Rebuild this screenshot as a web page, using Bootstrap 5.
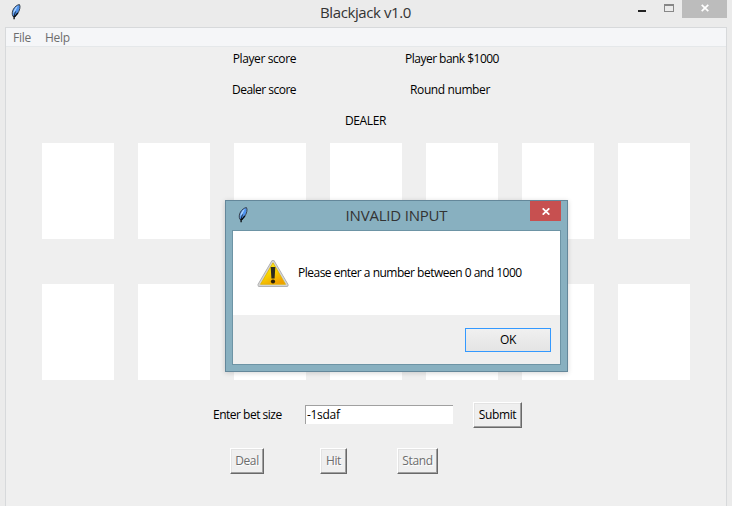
<!DOCTYPE html>
<html lang="en">
<head>
<meta charset="utf-8">
<meta name="viewport" content="width=device-width, initial-scale=1">
<title>Blackjack v1.0</title>
<link href="https://cdn.jsdelivr.net/npm/bootstrap@5.3.0/dist/css/bootstrap.min.css" rel="stylesheet">
<style>
  body { background: #ebebeb; font-family: "Open Sans", "Noto Sans", sans-serif; font-size: 12px; line-height: 16px; letter-spacing: -.4px; color: #000; height: 506px; }
  .titlebar { height: 27px; }
  .app-icon { margin: 4px 0 0 11px; }
  .win-title { font-size: 15px; line-height: 20px; letter-spacing: -.4px; color: #333; white-space: nowrap; }
  .main-title { padding: 2px 0 0 71px; }
  .close-gray { width: 45px; height: 18px; margin-right: 5px; background: #bcbcbc; }
  .frame { margin: 0 5px; height: 479px; border: 1px solid #d7d9db; border-bottom: 0; background: #efefef; }
  .menubar { height: 19px; background: #f5f6f8; border-bottom: 1px solid #e5e8ea; padding-left: 7px; gap: 14px; color: #6d6d6d; line-height: 20px; letter-spacing: -.25px; }
  .score-row { height: 31px; padding-top: 4px; }
  .left-label { width: 290px; text-align: right; }
  .right-label { width: 312px; text-align: center; }
  .bank { letter-spacing: -.53px; }
  .dealer-score { letter-spacing: -.52px; }
  .round-no { width: 308px; letter-spacing: -.4px; }
  .dealer-head { padding-right: 1px; }
  .slots-area { padding-top: 3px; }
  .slots { gap: 24px; margin-left: 36px; height: 96px; }
  .slot { width: 72px; background: #fff; }
  .slots + .slots { margin-top: 45px; }
  .bet-row { margin: 22px 0 0 207px; height: 26px; }
  .bet-label { width: 92px; letter-spacing: -.5px; }
  .bet-entry { width: 148px; height: 19px; margin: 0 20px 1px 0; border: 0; border-top: 1px solid #a0a0a0; border-left: 1px solid #a0a0a0; padding: 0 0 1px 1px; background: #fff; letter-spacing: -.3px; border-radius: 0; outline: 0; }
  .tk-btn { height: 26px; padding: 0; border: 1px solid; border-color: #fff #696969 #696969 #fff; box-shadow: inset -1px -1px #a0a0a0, inset 1px 1px #e3e3e3; background: #efefef; letter-spacing: -.35px; color: #000; }
  .tk-btn:disabled { color: #6d6d6d; text-shadow: 1px 1px #fff; }
  .play-row { margin: 20px 0 0 224px; }
  .w-submit { width: 49px; } .w-deal { width: 34px; margin-right: 56px; } .w-hit { width: 27px; margin-right: 50px; } .w-stand { width: 41px; }
  .dialog-win { left: 225px; top: 200px; width: 343px; height: 172px; background: #88b0c0; border: 1px solid #64879a; box-shadow: 0 1px 5px rgba(0,0,0,.17); padding: 0 6px 6px; }
  .dialog-bar { height: 29px; }
  .dialog-icon { margin: 6px 0 0 6px; }
  .dialog-title { padding: 4px 0 0 14px; letter-spacing: -.2px; }
  .close-red { width: 31px; height: 20px; background: #c75050; }
  .dialog-body { height: 135px; border: 1px solid #6d94a5; background: #efefef; }
  .dialog-msg { height: 84px; background: #fff; padding-left: 24px; }
  .warn-icon { margin-top: 2px; }
  .msg-text { margin-left: 9px; letter-spacing: -.5px; }
  .dialog-foot { height: 49px; padding-right: 9px; }
  .ok-btn { width: 86px; height: 24px; padding: 0; border: 1px solid #3399ff; background: linear-gradient(#f0f0f0, #e4e4e4); color: #000; letter-spacing: inherit; }
</style>
</head>
<body class="overflow-hidden m-0">
<svg class="d-none">
  <symbol id="feather" viewBox="0 0 11 17">
    <path d="M2 12.500C.8 10.500 1 7.500 2.500 5 3.800 2.800 6.300.6 8.500.6 9.700 2.500 8.700 6.500 6.700 9.500 5.500 11.200 4.500 12.200 3.600 12.700z" fill="#4f93ee" stroke="#3a434f" stroke-width="1"/>
    <path d="M2.300 9.800C2.200 6.800 4.300 3.500 7 1.800L4.500 6.500z" fill="#b4d6fa"/>
    <path d="M6.800 8.800 4 12.300 3.100 12.300 3.100 15.200" fill="none" stroke="#05070a" stroke-width="1.300"/>
    <path d="M3.200 12.500C3.500 10.200 4 8.800 4.700 7.500" fill="none" stroke="#10151d" stroke-width=".9"/>
  </symbol>
  <symbol id="cross" viewBox="0 0 8 7">
    <path d="M.7.3 7.300 6.700M7.300.3.7 6.700" stroke="#fff" stroke-width="1.700" fill="none"/>
  </symbol>
</svg>

<header class="titlebar d-flex justify-content-between align-items-start">
  <svg class="app-icon" width="11" height="17"><use href="#feather"/></svg>
  <div class="win-title main-title flex-grow-1 text-center">Blackjack v1.0</div>
  <svg width="44" height="18" shape-rendering="crispEdges">
    <rect x="0" y="10" width="8" height="2" fill="#222"/>
    <path d="M26 4h10v8H26zM27 6v5h8V6z" fill="#878787" fill-rule="evenodd"/>
  </svg>
  <div class="close-gray d-flex justify-content-center pt-1"><svg width="8" height="8"><use href="#cross"/></svg></div>
</header>

<main class="frame">
  <nav class="menubar d-flex"><span>File</span><span>Help</span></nav>
  <div class="score-row d-flex"><div class="left-label">Player score</div><div class="right-label bank">Player bank $1000</div></div>
  <div class="score-row d-flex"><div class="left-label dealer-score">Dealer score</div><div class="right-label round-no">Round number</div></div>
  <div class="score-row dealer-head text-center">DEALER</div>
  <div class="slots-area">
    <div class="slots d-flex"><div class="slot"></div><div class="slot"></div><div class="slot"></div><div class="slot"></div><div class="slot"></div><div class="slot"></div><div class="slot"></div></div>
    <div class="slots d-flex"><div class="slot"></div><div class="slot"></div><div class="slot"></div><div class="slot"></div><div class="slot"></div><div class="slot"></div><div class="slot"></div></div>
  </div>
  <form class="bet-row d-flex align-items-center">
    <label class="bet-label" for="bet">Enter bet size</label>
    <input class="bet-entry" id="bet" type="text" value="-1sdaf">
    <button class="tk-btn w-submit" type="button">Submit</button>
  </form>
  <div class="play-row d-flex">
    <button class="tk-btn w-deal" disabled>Deal</button>
    <button class="tk-btn w-hit" disabled>Hit</button>
    <button class="tk-btn w-stand" disabled>Stand</button>
  </div>
</main>

<section class="dialog-win position-absolute" role="dialog">
  <div class="dialog-bar d-flex align-items-start">
    <svg class="dialog-icon" width="11" height="17"><use href="#feather"/></svg>
    <div class="win-title dialog-title flex-grow-1 text-center">INVALID INPUT</div>
    <div class="close-red d-flex align-items-center justify-content-center"><svg width="8" height="7"><use href="#cross"/></svg></div>
  </div>
  <div class="dialog-body">
    <div class="dialog-msg d-flex align-items-center">
      <svg class="warn-icon" width="32" height="30" viewBox="0 0 32 30">
        <defs><linearGradient id="warn" x1="0" y1="0" x2=".6" y2="1"><stop offset="0" stop-color="#fff23a"/><stop offset=".5" stop-color="#f8d800"/><stop offset="1" stop-color="#f0a000"/></linearGradient></defs>
        <path d="M16 3 29.500 26H2.500z" fill="#c4c4c4" stroke="#a9a9a9" stroke-width="4" stroke-linejoin="round"/>
        <path d="M16 3 29.500 26H2.500z" fill="#d4d4d4" stroke="#d4d4d4" stroke-width="2.500" stroke-linejoin="round"/>
        <path d="M16 3.800 28.500 25.300H3.500z" fill="url(#warn)" stroke="#e0b400" stroke-width=".8" stroke-linejoin="round"/>
        <path d="M13.700 8h4.600l-.7 11.500h-3.200z" fill="#2b2b20"/><circle cx="16" cy="22.500" r="2.100" fill="#2b2008"/>
      </svg>
      <span class="msg-text">Please enter a number between 0 and 1000</span>
    </div>
    <div class="dialog-foot d-flex align-items-center justify-content-end"><button class="ok-btn">OK</button></div>
  </div>
</section>
<script src="https://cdn.jsdelivr.net/npm/bootstrap@5.3.0/dist/js/bootstrap.bundle.min.js"></script>
</body>
</html>
